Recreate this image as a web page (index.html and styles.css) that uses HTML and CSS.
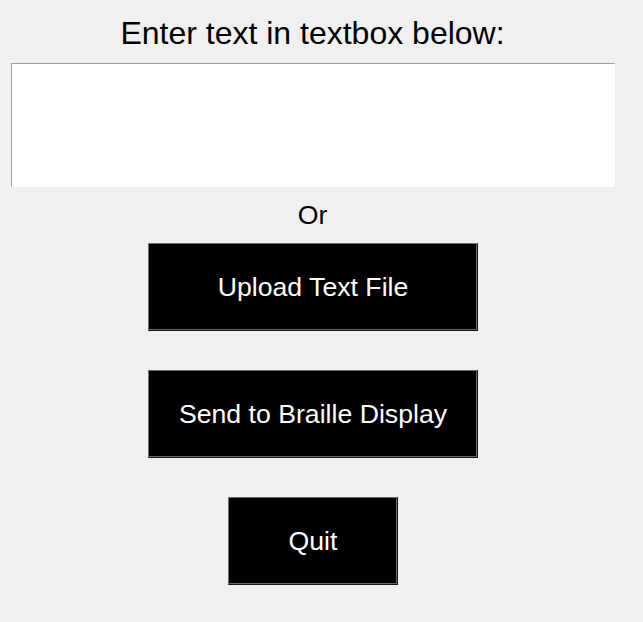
FILE: index.html
```html
<!DOCTYPE html>
<html>
<head>
<meta charset="utf-8">
<link rel="stylesheet" href="styles.css">
<title>Braille</title>
</head>
<body>
<div class="app">
  <div class="title">Enter text in textbox below:</div>
  <textarea class="textbox"></textarea>
  <div class="or">Or</div>
  <button class="btn btn-wide btn-first">Upload Text File</button>
  <button class="btn btn-wide">Send to Braille Display</button>
  <button class="btn btn-quit">Quit</button>
</div>
</body>
</html>
```
FILE: styles.css
```css
html, body {
  margin: 0;
  padding: 0;
  background: #f0f0f0;
  width: 643px;
  height: 622px;
  overflow: hidden;
}
.app {
  width: 625px;
  display: flex;
  flex-direction: column;
  align-items: center;
  font-family: "Liberation Sans", Arial, sans-serif;
  color: #000;
}
.title {
  margin-top: 15px;
  font-size: 32px;
  line-height: 37px;
  white-space: nowrap;
}
.textbox {
  box-sizing: border-box;
  margin: 11px 0 0 0;
  width: 604px;
  height: 124px;
  padding: 0;
  background: #fff;
  border-style: solid;
  border-width: 1px;
  border-color: #a0a0a0 #ffffff #ffffff #a0a0a0;
  resize: none;
  outline: none;
  font-family: "Liberation Sans", Arial, sans-serif;
  font-size: 16px;
}
.or {
  margin-top: 13px;
  font-size: 26.67px;
  line-height: 31px;
}
.btn {
  box-sizing: border-box;
  height: 88px;
  margin: 39px 0 0 1px;
  padding: 0;
  background: #000;
  color: #fff;
  font-family: "Liberation Sans", Arial, sans-serif;
  font-size: 26.67px;
  border-style: solid;
  border-width: 1px;
  border-color: #6e6e6e #141414 #141414 #6e6e6e;
  box-shadow: inset -1px -1px 0 #6a6a6a;
  display: flex;
  align-items: center;
  justify-content: center;
  white-space: nowrap;
}
.btn-first {
  margin-top: 12px;
}
.btn-wide {
  width: 330px;
}
.btn-quit {
  width: 170px;
}
```
